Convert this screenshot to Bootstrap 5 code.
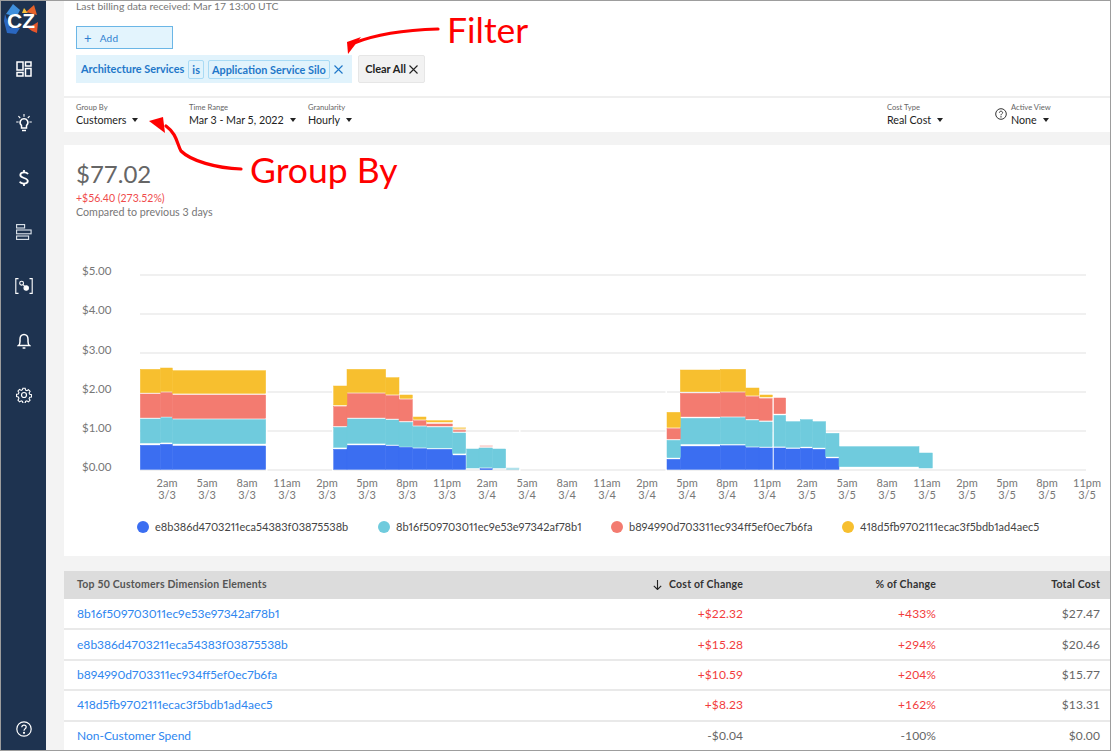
<!DOCTYPE html>
<html lang="en">
<head>
<meta charset="utf-8">
<title>Cost Report</title>
<link href="https://cdn.jsdelivr.net/npm/bootstrap@5.3.0/dist/css/bootstrap.min.css" rel="stylesheet">
<style>
html,body{height:100%;margin:0;overflow:hidden}
body{font-family:"Lato","Liberation Sans",sans-serif;color:#333;background:#fff}
.shell{height:751px;border:1px solid #9d9d9d;position:relative;overflow:hidden}
.side{width:45px;background:#1e3350;flex:none;color:#fff}
.side-logo{height:40px;padding:3px 0 0 3px}
.side-item{height:54.3px;color:#fff}
.side-nav{padding-top:1px}
.side-foot{height:29px}
.main{background:#f3f3f3;padding-left:18px;min-width:0}
.sheet{background:#fff}
.top-sheet{height:131px;overflow:hidden}
.billing{font-size:10.4px;color:#777;line-height:10px;padding:0 12px;height:25px}
.add-btn{width:97px;height:23px;margin-left:12px;background:#e3f4fd;border:1px solid #6bb6e6;color:#2e7fd0;font-size:10px;line-height:20px;padding:0 7px;display:flex;gap:8px;align-items:center;letter-spacing:.2px}
.add-plus{font-size:13px}
.chips{margin:6px 0 0 12px;gap:6px;height:28px}
.chip-box{background:#e1f3fc;color:#1f77c9;font-size:10.9px;padding:0 5px;width:276px;height:28px;font-weight:700;white-space:nowrap}
.chip-in{border:1px solid #a9dbf5;height:19px;line-height:17px;padding:0 3px;border-radius:2px}
.clear-btn{width:67px;height:28px;background:#f2f2f2;border:1px solid #e6e6e6;border-radius:2px;font-size:11px;font-weight:700;color:#222;gap:3px;white-space:nowrap}
.rule{border-top:2px solid #efefef;margin-top:13px}
.ctrl-row{padding:4px 0 0 12px;height:33px}
.ctrl{line-height:1}
.ctrl-label{font-size:7.6px;color:#666;line-height:10px}
.ctrl-val{font-size:10.7px;color:#222;line-height:14px;margin-top:1px;white-space:nowrap}
.caret-mark{display:inline-block;border:3.5px solid transparent;border-top:4px solid #222;border-bottom:0;margin-left:6px;vertical-align:2px}
.w-a{width:113px}.w-b{width:119px}.w-c{width:100px}.w-d{width:108px}.w-e{width:115px}
.help-ico{margin-top:6px}
.chart-sheet{height:411px;margin-top:13px;padding-top:12px;position:relative}
.big-num{font-size:24px;color:#666;line-height:33px;padding-left:12px;height:33px}
.delta{font-size:10.5px;color:#f04b4b;line-height:14px;padding-left:12px;margin-top:1px}
.compare{font-size:10.7px;color:#777;line-height:14px;padding-left:12px}
.plot{display:block;width:1046px;height:255px;margin-top:31px}
.plot text{font-family:"Lato","Liberation Sans",sans-serif;font-size:11px;fill:#777}
.plot text.ylab{font-size:11.5px}
.key-row{height:20px;margin-top:12px;padding-left:73px;font-size:11px;color:#444;font-variant-numeric:proportional-nums}
.key-item{gap:6px}
.dot-mark{width:12px;height:12px;border-radius:50%;display:inline-block}
.w-k1{width:241px}.w-k2{width:233px}.w-k3{width:231px}
.grid-sheet{margin:15px 0 0;width:1046px}
.cost-table{table-layout:fixed;width:1046px;margin:0;font-size:12px;background:#fff;border-collapse:collapse}
.cost-table th{background:#dcdcdc;color:#555;font-weight:700;font-size:10.5px;height:28px;padding:0 10px 0 13px;border:0;letter-spacing:.2px}
.cost-table th.num-h{color:#333;text-align:right;padding:0 10px 0 0}
.cost-table td{height:30.4px;padding:0 10px 0 13px;border:0;border-top:2px solid #e9e9e9;color:#666;letter-spacing:.1px;background:#fff}
.cost-table tr:first-child td{border-top:0}
.cost-table td.num-c{text-align:right;padding:0 10px 0 0}
.cost-table td.up{color:#f23c3c}
.cost-table a{color:#2e86ef;text-decoration:none;font-variant-numeric:proportional-nums;letter-spacing:0}
.c1{width:489px}.c2{width:200px}.c3{width:193px}.c4{width:164px}
.notes{position:absolute;left:0;top:0;width:1111px;height:751px;pointer-events:none}
.notes text{font-family:"Lato","Liberation Sans",sans-serif;font-size:35.500px;fill:#f00}
</style>
</head>
<body>
<div class="shell d-flex">
  <aside class="side d-flex flex-column">
    <div class="side-logo">
      <svg width="38" height="33" viewBox="0 0 38 33">
        <polygon points="2,10 9,0 16,6 14,10 6,11" fill="#3f8fdc"/>
        <polygon points="1,10 0,17 3,29 12,30 16,24 6,24" fill="#2a67c0"/>
        <polygon points="18,9 20,4 24,9" fill="#f4c13a"/>
        <polygon points="22,8 30,1 33,11" fill="#e8632a"/>
        <polygon points="24,24 34,18 33,29 28,27" fill="#e6552a"/>
        <text x="3" y="24" font-family="Liberation Sans, sans-serif" font-weight="700" font-size="21" fill="#fff">CZ</text>
      </svg>
    </div>
    <nav class="side-nav">
      <div class="side-item d-flex align-items-center justify-content-center">
        <svg width="16" height="16" viewBox="0 0 16 16" fill="none" stroke="#fff" stroke-width="1.5"><rect x="1" y="1" width="6" height="8"/><rect x="9.5" y="1" width="5.5" height="4"/><rect x="1" y="11.5" width="6" height="3.5"/><rect x="9.5" y="7.5" width="5.5" height="7.5"/></svg>
      </div>
      <div class="side-item d-flex align-items-center justify-content-center">
        <svg width="16" height="18" viewBox="0 0 16 18" fill="none" stroke="#fff" stroke-width="1.5"><path d="M5.5 11.5C4 10 3.8 8 4.6 6.6 5.500 5.200 7 4.800 8 4.800s2.600.4 3.400 1.800c.8 1.400.6 3.400-.9 4.900v2.400h-5z"/><path d="M6 16.500h4"/><path d="M8 0v2.800M2.400 2.200l1.800 1.800M13.600 2.200l-1.800 1.800M.2 8h2.400M13.400 8h2.400" stroke-width="1.100"/></svg>
      </div>
      <div class="side-item d-flex align-items-center justify-content-center">
        <svg width="10" height="16" viewBox="0 0 10 16" fill="none" stroke="#fff" stroke-width="1.8"><path d="M9 4.200C8.400 3 7 2.400 5 2.400 2.800 2.400 1.300 3.400 1.300 5S2.800 7.300 5 8s3.800 1.400 3.800 3.100S7.200 13.600 5 13.600c-2 0-3.600-.7-4.200-2"/><path d="M5 0v2.400M5 13.600v2.400"/></svg>
      </div>
      <div class="side-item d-flex align-items-center justify-content-center">
        <svg width="16" height="16" viewBox="0 0 16 16" fill="none" stroke="#dfe6ee" stroke-width="1.100"><rect x=".6" y=".6" width="8" height="3.400"/><rect x=".6" y="6" width="14.500" height="3.800"/><rect x=".6" y="12" width="12" height="3.400"/></svg>
      </div>
      <div class="side-item d-flex align-items-center justify-content-center">
        <svg width="18" height="16" viewBox="0 0 18 16" fill="none" stroke="#fff" stroke-width="1.100"><path d="M3.500.6H.8v14.800h2.700M14.500.6h2.700v14.800h-2.700"/><circle cx="6.600" cy="5.200" r="1.900"/><circle cx="11.200" cy="10" r="2.200" fill="#fff"/><path d="M8 6.600l2 2"/></svg>
      </div>
      <div class="side-item d-flex align-items-center justify-content-center">
        <svg width="14" height="16" viewBox="0 0 14 16" fill="none" stroke="#fff" stroke-width="1.500"><path d="M1.500 12.600c1.200-1 1.500-2.400 1.500-4.200V6.200C3 3.600 4.600 1.400 7 1.400s4 2.200 4 4.800v2.200c0 1.800.3 3.200 1.500 4.200z"/><path d="M5.600 15h2.800"/></svg>
      </div>
      <div class="side-item d-flex align-items-center justify-content-center">
        <svg width="16" height="16" viewBox="0 0 16 16" fill="none" stroke="#fff" stroke-width="1.200"><path d="M6.700.8h2.600l.4 2 1.500.7 1.800-1.100 1.800 1.800-1.100 1.800.7 1.500 2 .4v2.600l-2 .4-.7 1.500 1.100 1.800-1.800 1.800-1.800-1.100-1.500.7-.4 2H6.700l-.4-2-1.500-.7-1.800 1.100-1.800-1.800L2.300 12l-.7-1.500-2-.4V7.500l2-.4.7-1.500-1.100-1.800L3 2l1.800 1.100 1.500-.7z" transform="translate(.9 .6) scale(.89)"/><circle cx="8" cy="8" r="2.500"/></svg>
      </div>
    </nav>
    <div class="side-foot mt-auto d-flex justify-content-center">
      <svg width="16" height="16" viewBox="0 0 16 16" fill="none" stroke="#fff" stroke-width="1.200"><circle cx="8" cy="8" r="7.200"/><path d="M5.800 6.200C5.900 4.900 6.800 4.200 8 4.200s2.200.8 2.200 1.900c0 1.800-2.200 1.600-2.200 3.600"/><circle cx="8" cy="11.800" r=".5" fill="#fff"/></svg>
    </div>
  </aside>

  <main class="main flex-grow-1">
    <section class="sheet top-sheet">
      <div class="billing">Last billing data received: Mar 17 13:00 UTC</div>
      <div class="add-btn"><span class="add-plus">+</span><span>Add</span></div>
      <div class="chips d-flex">
        <div class="chip-box d-flex align-items-center">
          <span>Architecture Services</span>
          <span class="chip-in ms-1">is</span>
          <span class="chip-in ms-1">Application Service Silo</span>
          <svg class="ms-1" width="9" height="9" viewBox="0 0 9 9" stroke="#1f77c9" stroke-width="1.100"><path d="M.5.5l8 8M8.500.5l-8 8"/></svg>
        </div>
        <div class="clear-btn d-flex align-items-center justify-content-center">
          <span>Clear All</span>
          <svg width="9" height="9" viewBox="0 0 9 9" stroke="#222" stroke-width="1.100"><path d="M.5.5l8 8M8.500.5l-8 8"/></svg>
        </div>
      </div>
      <div class="rule"></div>
      <div class="ctrl-row d-flex">
        <div class="ctrl w-a"><div class="ctrl-label">Group By</div><div class="ctrl-val">Customers<span class="caret-mark"></span></div></div>
        <div class="ctrl w-b"><div class="ctrl-label">Time Range</div><div class="ctrl-val">Mar 3 - Mar 5, 2022<span class="caret-mark"></span></div></div>
        <div class="ctrl w-c"><div class="ctrl-label">Granularity</div><div class="ctrl-val">Hourly<span class="caret-mark"></span></div></div>
        <div class="ctrl w-d ms-auto"><div class="ctrl-label">Cost Type</div><div class="ctrl-val">Real Cost<span class="caret-mark"></span></div></div>
        <div class="ctrl w-e d-flex gap-1">
          <svg class="help-ico" width="12" height="12" viewBox="0 0 12 12" fill="none" stroke="#333"><circle cx="6" cy="6" r="5.300"/><path d="M4.400 4.700C4.500 3.700 5.100 3.200 6 3.200s1.600.6 1.600 1.400C7.600 5.900 6 5.800 6 7.300"/><circle cx="6" cy="8.900" r=".3"/></svg>
          <div><div class="ctrl-label">Active View</div><div class="ctrl-val">None<span class="caret-mark"></span></div></div>
        </div>
      </div>
    </section>

    <section class="sheet chart-sheet">
      <div class="big-num">$77.02</div>
      <div class="delta">+$56.40 (273.52%)</div>
      <div class="compare">Compared to previous 3 days</div>
      <svg class="plot" viewBox="64 250 1046 255">
        <g stroke="#ebebeb" stroke-width="1.300">
          <path d="M140 275H1086M140 314H1086M140 353H1086M140 392H1086M140 431H1086M140 470H1086"/>
        </g>
        <g>
          <text class="ylab" x="82" y="275">$5.00</text>
          <text class="ylab" x="82" y="314">$4.00</text>
          <text class="ylab" x="82" y="354">$3.00</text>
          <text class="ylab" x="82" y="393">$2.00</text>
          <text class="ylab" x="82" y="432">$1.00</text>
          <text class="ylab" x="82" y="471">$0.00</text>
        </g>
        <g fill="#fff">
          <rect x="266" y="385" width="1.500" height="90"/>
          <rect x="332" y="385" width="1.500" height="90"/>
          <rect x="519" y="425" width="1.500" height="50"/>
          <rect x="665.500" y="385" width="1.500" height="90"/>
        </g>
        <!-- first and second blocks -->
        <g transform="translate(130 350) scale(.33333)" stroke-width="1.500">
          <g fill="#3b6ef1" stroke="#3b6ef1">
            <rect x="31" y="286" width="61" height="72"/><rect x="92" y="283" width="35" height="75"/><rect x="127" y="288" width="280" height="70"/>
            <rect x="611" y="298" width="40" height="60"/><rect x="651" y="286" width="116" height="72"/><rect x="767" y="288" width="40" height="70"/><rect x="807" y="292" width="40" height="66"/><rect x="847" y="296" width="43" height="62"/><rect x="890" y="298" width="77" height="60"/><rect x="967" y="316" width="40" height="42"/><rect x="1050" y="356" width="37" height="3"/>
          </g>
          <g fill="#6fcbdd" stroke="#6fcbdd">
            <rect x="31" y="207" width="61" height="72"/><rect x="92" y="203" width="35" height="74"/><rect x="127" y="209" width="280" height="72"/>
            <rect x="611" y="232" width="40" height="60"/><rect x="651" y="207" width="116" height="73"/><rect x="767" y="210" width="40" height="74"/><rect x="807" y="217" width="40" height="73"/><rect x="847" y="230" width="43" height="62"/><rect x="890" y="232" width="77" height="62"/><rect x="967" y="249" width="40" height="61"/><rect x="1010" y="297" width="37" height="57"/><rect x="1047" y="294" width="40" height="58"/><rect x="1087" y="297" width="40" height="57"/><rect x="1130" y="354" width="37" height="5" opacity=".55"/>
          </g>
          <g fill="#f37b70" stroke="#f37b70">
            <rect x="31" y="132" width="61" height="71"/><rect x="92" y="128" width="35" height="72"/><rect x="127" y="135" width="280" height="70"/>
            <rect x="611" y="170" width="40" height="58"/><rect x="651" y="131" width="116" height="72"/><rect x="767" y="137" width="40" height="69"/><rect x="807" y="149" width="40" height="64"/><rect x="850" y="212" width="38" height="14"/><rect x="890" y="222" width="77" height="6"/><rect x="970" y="240" width="37" height="5" opacity=".8"/><rect x="1050" y="286" width="37" height="5" opacity=".3"/>
          </g>
          <g fill="#f7bf2f" stroke="#f7bf2f">
            <rect x="31" y="58" width="61" height="70"/><rect x="92" y="54" width="35" height="70"/><rect x="127" y="62" width="280" height="68"/>
            <rect x="611" y="108" width="40" height="57"/><rect x="651" y="58" width="116" height="69"/><rect x="767" y="83" width="40" height="50"/><rect x="810" y="135" width="37" height="10"/><rect x="850" y="201" width="38" height="7"/><rect x="890" y="212" width="77" height="4"/><rect x="970" y="233" width="37" height="4" opacity=".6"/>
          </g>
        </g>
        <!-- third block -->
        <g transform="translate(650 350) scale(.33333)" stroke-width="1.500">
          <g fill="#3b6ef1" stroke="#3b6ef1">
            <rect x="51" y="328" width="40" height="30"/><rect x="91" y="289" width="120" height="69"/><rect x="211" y="287" width="76" height="71"/><rect x="287" y="293" width="40" height="65"/><rect x="327" y="294" width="80" height="64"/><rect x="407" y="297" width="44" height="61"/><rect x="451" y="295" width="36" height="63"/><rect x="487" y="298" width="40" height="60"/><rect x="527" y="325" width="40" height="33"/>
          </g>
          <g fill="#6fcbdd" stroke="#6fcbdd">
            <rect x="51" y="271" width="40" height="52"/><rect x="91" y="205" width="120" height="77"/><rect x="211" y="203" width="76" height="79"/><rect x="287" y="211" width="40" height="78"/><rect x="327" y="216" width="40" height="74"/><rect x="370" y="196" width="37" height="93"/><rect x="407" y="215" width="44" height="77"/><rect x="451" y="209" width="36" height="81"/><rect x="487" y="215" width="40" height="78"/><rect x="527" y="250" width="40" height="70"/><rect x="567" y="290" width="240" height="60"/><rect x="807" y="309" width="40" height="45"/>
          </g>
          <g fill="#f37b70" stroke="#f37b70">
            <rect x="51" y="236" width="40" height="31"/><rect x="91" y="130" width="120" height="70"/><rect x="211" y="128" width="76" height="71"/><rect x="287" y="140" width="40" height="67"/><rect x="327" y="146" width="40" height="65"/><rect x="370" y="144" width="37" height="47"/>
          </g>
          <g fill="#f7bf2f" stroke="#f7bf2f">
            <rect x="51" y="187" width="40" height="45"/><rect x="91" y="60" width="120" height="65"/><rect x="211" y="58" width="76" height="66"/><rect x="287" y="114" width="40" height="22"/><rect x="330" y="135" width="37" height="6"/>
          </g>
          <rect x="368" y="140" width="3.500" height="219" fill="#fff" opacity=".85"/>
        </g>
        <g text-anchor="middle">
          <text x="167" y="487">2am</text><text x="167" y="499">3/3</text>
          <text x="207" y="487">5am</text><text x="207" y="499">3/3</text>
          <text x="247" y="487">8am</text><text x="247" y="499">3/3</text>
          <text x="287" y="487">11am</text><text x="287" y="499">3/3</text>
          <text x="327" y="487">2pm</text><text x="327" y="499">3/3</text>
          <text x="367" y="487">5pm</text><text x="367" y="499">3/3</text>
          <text x="407" y="487">8pm</text><text x="407" y="499">3/3</text>
          <text x="447" y="487">11pm</text><text x="447" y="499">3/3</text>
          <text x="487" y="487">2am</text><text x="487" y="499">3/4</text>
          <text x="527" y="487">5am</text><text x="527" y="499">3/4</text>
          <text x="567" y="487">8am</text><text x="567" y="499">3/4</text>
          <text x="607" y="487">11am</text><text x="607" y="499">3/4</text>
          <text x="647" y="487">2pm</text><text x="647" y="499">3/4</text>
          <text x="687" y="487">5pm</text><text x="687" y="499">3/4</text>
          <text x="727" y="487">8pm</text><text x="727" y="499">3/4</text>
          <text x="767" y="487">11pm</text><text x="767" y="499">3/4</text>
          <text x="807" y="487">2am</text><text x="807" y="499">3/5</text>
          <text x="847" y="487">5am</text><text x="847" y="499">3/5</text>
          <text x="887" y="487">8am</text><text x="887" y="499">3/5</text>
          <text x="927" y="487">11am</text><text x="927" y="499">3/5</text>
          <text x="967" y="487">2pm</text><text x="967" y="499">3/5</text>
          <text x="1007" y="487">5pm</text><text x="1007" y="499">3/5</text>
          <text x="1047" y="487">8pm</text><text x="1047" y="499">3/5</text>
          <text x="1087" y="487">11pm</text><text x="1087" y="499">3/5</text>
        </g>
      </svg>
      <div class="key-row d-flex">
        <div class="key-item d-flex align-items-center w-k1"><span class="dot-mark" style="background:#3b6ef1"></span>e8b386d4703211eca54383f03875538b</div>
        <div class="key-item d-flex align-items-center w-k2"><span class="dot-mark" style="background:#6fcbdd"></span>8b16f509703011ec9e53e97342af78b1</div>
        <div class="key-item d-flex align-items-center w-k3"><span class="dot-mark" style="background:#f37b70"></span>b894990d703311ec934ff5ef0ec7b6fa</div>
        <div class="key-item d-flex align-items-center"><span class="dot-mark" style="background:#f7bf2f"></span>418d5fb9702111ecac3f5bdb1ad4aec5</div>
      </div>
    </section>

    <section class="grid-sheet">
      <table class="cost-table">
        <colgroup><col class="c1"><col class="c2"><col class="c3"><col class="c4"></colgroup>
        <thead>
          <tr><th>Top 50 Customers Dimension Elements</th><th class="num-h"><svg class="me-1" width="9" height="10" viewBox="0 0 9 10" fill="none" stroke="#222" stroke-width="1.100"><path d="M4.500 0v9.300M.8 5.800l3.700 3.700 3.700-3.700"/></svg> Cost of Change</th><th class="num-h">% of Change</th><th class="num-h">Total Cost</th></tr>
        </thead>
        <tbody>
          <tr><td><a href="#">8b16f509703011ec9e53e97342af78b1</a></td><td class="num-c up">+$22.32</td><td class="num-c up">+433%</td><td class="num-c">$27.47</td></tr>
          <tr><td><a href="#">e8b386d4703211eca54383f03875538b</a></td><td class="num-c up">+$15.28</td><td class="num-c up">+294%</td><td class="num-c">$20.46</td></tr>
          <tr><td><a href="#">b894990d703311ec934ff5ef0ec7b6fa</a></td><td class="num-c up">+$10.59</td><td class="num-c up">+204%</td><td class="num-c">$15.77</td></tr>
          <tr><td><a href="#">418d5fb9702111ecac3f5bdb1ad4aec5</a></td><td class="num-c up">+$8.23</td><td class="num-c up">+162%</td><td class="num-c">$13.31</td></tr>
          <tr><td><a href="#">Non-Customer Spend</a></td><td class="num-c">-$0.04</td><td class="num-c">-100%</td><td class="num-c">$0.00</td></tr>
        </tbody>
      </table>
    </section>
  </main>

  <svg class="notes" viewBox="0 0 1111 751">
    <g fill="none" stroke="#f00" stroke-width="3.200" stroke-linecap="round">
      <path d="M437 28C405 29 378 32 353 42"/>
      <path d="M240 168C215 167 190 160 180 150 176 143 176 133 165 125"/>
    </g>
    <polygon points="347,53 346,41 360,36" fill="#f00"/>
    <polygon points="148,120 162,116 164,132" fill="#f00"/>
    <text x="446" y="42">Filter</text>
    <text x="249" y="182">Group By</text>
  </svg>
</div>
<script src="https://cdn.jsdelivr.net/npm/bootstrap@5.3.0/dist/js/bootstrap.bundle.min.js"></script>
</body>
</html>
